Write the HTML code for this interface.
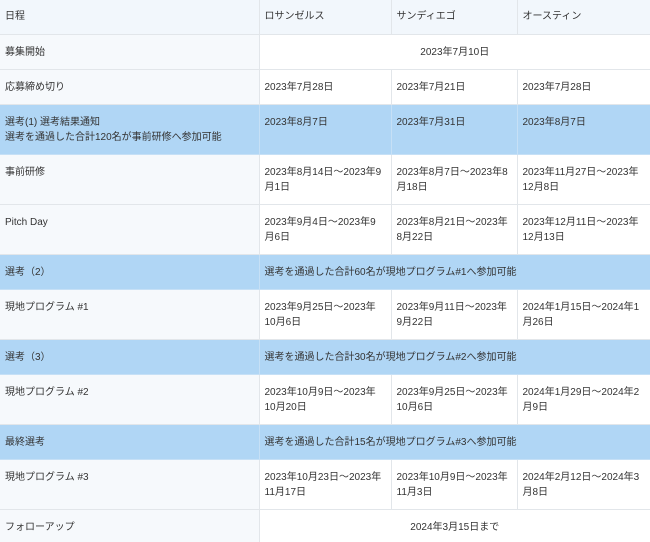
<!DOCTYPE html>
<html><head><meta charset="utf-8"><style>
html,body{margin:0;padding:0;background:#fff;width:650px;height:542px;overflow:hidden}
table{border-collapse:collapse;table-layout:fixed;width:650px;font-family:"Liberation Sans","Noto Sans CJK JP",sans-serif;font-size:10px;color:#333}
td{border:1px solid #e2e6ea;padding:10px 5px 9px;line-height:15px;vertical-align:top;white-space:nowrap;overflow:hidden;box-sizing:border-box}
td:first-child{background:#f6f9fc;border-left:none}
td:last-child{border-right:none}
tr.h td{background:#f2f7fc;border-top:none;padding-top:9px;padding-bottom:9px}
tr.b td{background:#b0d6f5;border-color:#c6e0f6}
.c{text-align:center}
</style></head><body>
<table>
<colgroup><col style="width:259px"><col style="width:132px"><col style="width:126px"><col style="width:133px"></colgroup>
<tr class="h" style="height:34px"><td>日程</td><td>ロサンゼルス</td><td>サンディエゴ</td><td>オースティン</td></tr>
<tr style="height:35px"><td>募集開始</td><td colspan="3" class="c">2023年7月10日</td></tr>
<tr style="height:35px"><td>応募締め切り</td><td>2023年7月28日</td><td>2023年7月21日</td><td>2023年7月28日</td></tr>
<tr class="b" style="height:50px"><td>選考(1) 選考結果通知<br>選考を通過した合計120名が事前研修へ参加可能</td><td>2023年8月7日</td><td>2023年7月31日</td><td>2023年8月7日</td></tr>
<tr style="height:50px"><td>事前研修</td><td>2023年8月14日～2023年9<br>月1日</td><td>2023年8月7日～2023年8<br>月18日</td><td>2023年11月27日～2023年<br>12月8日</td></tr>
<tr style="height:50px"><td>Pitch Day</td><td>2023年9月4日～2023年9<br>月6日</td><td>2023年8月21日～2023年<br>8月22日</td><td>2023年12月11日～2023年<br>12月13日</td></tr>
<tr class="b" style="height:35px"><td>選考（2）</td><td colspan="3">選考を通過した合計60名が現地プログラム#1へ参加可能</td></tr>
<tr style="height:50px"><td>現地プログラム #1</td><td>2023年9月25日～2023年<br>10月6日</td><td>2023年9月11日～2023年<br>9月22日</td><td>2024年1月15日～2024年1<br>月26日</td></tr>
<tr class="b" style="height:35px"><td>選考（3）</td><td colspan="3">選考を通過した合計30名が現地プログラム#2へ参加可能</td></tr>
<tr style="height:50px"><td>現地プログラム #2</td><td>2023年10月9日～2023年<br>10月20日</td><td>2023年9月25日～2023年<br>10月6日</td><td>2024年1月29日～2024年2<br>月9日</td></tr>
<tr class="b" style="height:35px"><td>最終選考</td><td colspan="3">選考を通過した合計15名が現地プログラム#3へ参加可能</td></tr>
<tr style="height:50px"><td>現地プログラム #3</td><td>2023年10月23日～2023年<br>11月17日</td><td>2023年10月9日～2023年<br>11月3日</td><td>2024年2月12日～2024年3<br>月8日</td></tr>
<tr style="height:35px"><td>フォローアップ</td><td colspan="3" class="c">2024年3月15日まで</td></tr>
</table>
</body></html>
